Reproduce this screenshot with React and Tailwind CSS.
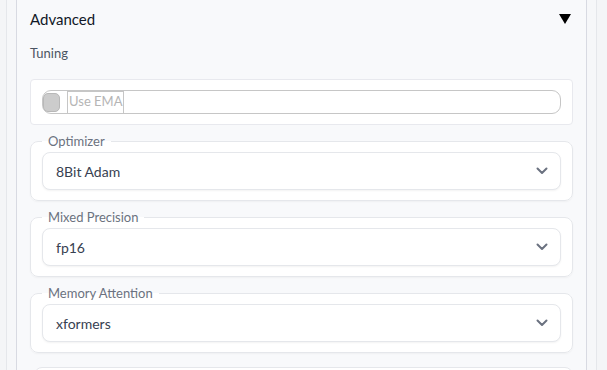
import React from 'react';

const font = { fontFamily: '"Source Sans Pro", Lato, "Noto Sans", sans-serif' };

const Chevron = () => (
  <svg width="12" height="8" viewBox="0 0 12 8" className="shrink-0">
    <path d="M1.5 1.5 L6 6 L10.5 1.5" fill="none" stroke="#6b7280" strokeWidth="2" strokeLinecap="round" strokeLinejoin="round" />
  </svg>
);

const SelectBlock = ({ label, value }) => (
  <fieldset className="rounded-[8px] border border-[#e5e7eb] bg-white px-[11px] pb-[10px] pt-[2px] shadow-[0_1px_2px_rgba(0,0,0,0.04)]">
    <legend className="ml-0 px-[6px] text-[13px] leading-[18px] text-[#6b7280]">{label}</legend>
    <div className="flex h-[38px] items-center justify-between rounded-[8px] border border-[#e5e7eb] bg-white pl-[13px] pr-[12px] shadow-[0_1px_2px_rgba(0,0,0,0.05)]">
      <span className="text-[14px] text-[#374151]">{value}</span>
      <Chevron />
    </div>
  </fieldset>
);

export default function App() {
  const selects = [
    { label: 'Optimizer', value: '8Bit Adam' },
    { label: 'Mixed Precision', value: 'fp16' },
    { label: 'Memory Attention', value: 'xformers' },
  ];

  return (
    <div className="h-[370px] w-[607px] overflow-hidden bg-[#f4f5f7] pl-[6px]" style={font}>
      <div className="h-full w-[591px] border-x border-[#e5e7eb] bg-[#f6f7f9] px-[9px]">
        <div className="h-full border-x border-[#d8dae2] bg-[#f8f9fb] px-[13px] pt-[8px]">
          {/* header */}
          <div className="flex h-[22px] items-center justify-between">
            <span className="text-[15px] text-[#111827]">Advanced</span>
            <svg width="12" height="10" viewBox="0 0 12 10" className="mr-[2px]">
              <polygon points="0,0 12,0 6,10" fill="#000" />
            </svg>
          </div>
          <div className="mt-[14px] text-[13px] leading-[18px] text-[#4b5563]">Tuning</div>

          <div className="mt-[17px] flex flex-col gap-[7px]">
            {/* checkbox row */}
            <div className="rounded-[4px] border border-[#e8e9ee] bg-white px-[11px] py-[10px]">
              <div className="flex h-[24px] items-center rounded-[9px] border border-[#c6c6c6] bg-white">
                <span className="h-[19px] w-[17px] shrink-0 rounded-[5px] border border-[#b8b8b8] bg-[#cccccc]" />
                <span className="ml-[7px] flex h-[23px] items-center whitespace-nowrap border border-[#c6c6c6] px-[1px] text-[13px] text-[#b5b5b5]">
                  Use EMA
                </span>
              </div>
            </div>

            {selects.map((s) => (
              <SelectBlock key={s.label} label={s.label} value={s.value} />
            ))}

            <div className="mt-[7px] ml-[4px] h-[20px] rounded-t-[8px] border border-[#e5e7eb] bg-white" />
          </div>
        </div>
      </div>
    </div>
  );
}
